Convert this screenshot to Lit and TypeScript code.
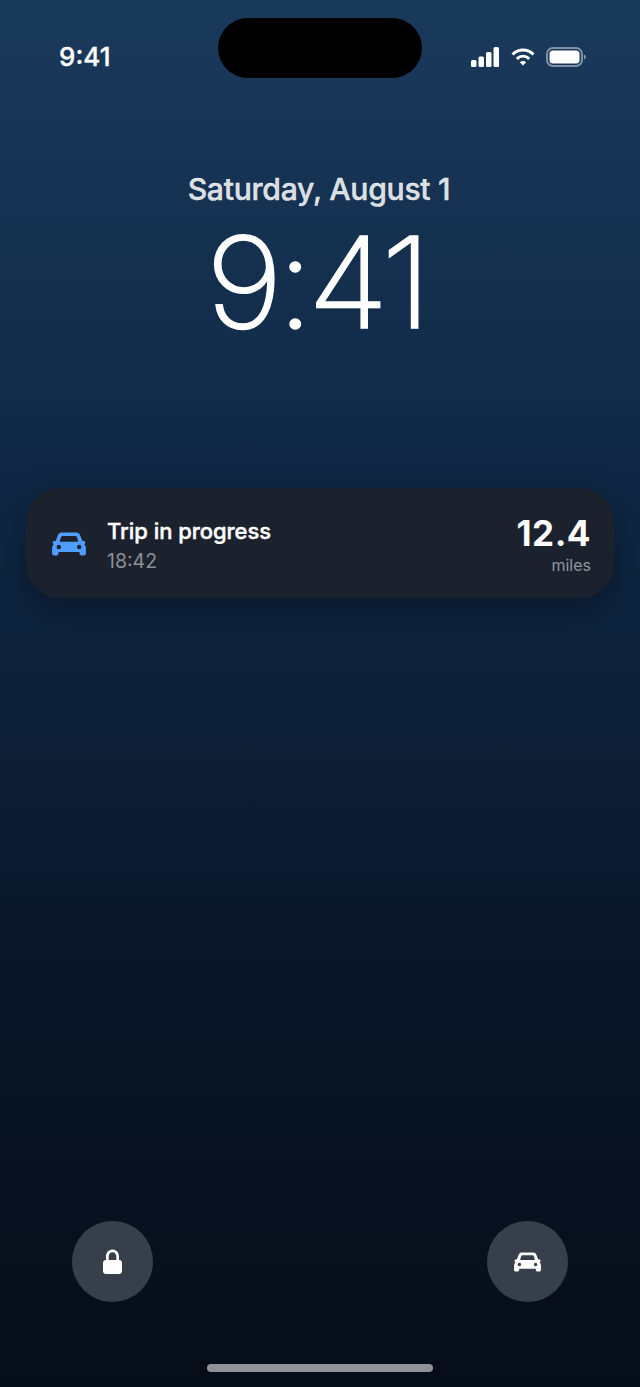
import { LitElement, html, css, svg } from "lit";
import { customElement } from "lit/decorators.js";

const carPath = svg`<path fill-rule="evenodd" d="M9.500 .5h15c1.600 0 2.900 1 3.500 2.400L30.400 9h1.300c1 0 1.700 .7 1.700 1.500s-.6 1.400-1.300 1.500l.9 1.300c.6 .8 .9 1.700 .9 2.700v5.500c0 1.100-.9 2-2 2h-2.400c-1.100 0-2-.9-2-2V20H6.500v1.500c0 1.100-.9 2-2 2H2.100c-1.100 0-2-.9-2-2V16c0-1 .3-1.900 .9-2.700l.9-1.300c-.7-.1-1.300-.7-1.300-1.500S1.300 9 2.300 9h1.300L6 2.900C6.600 1.500 7.900 .5 9.500 .5zM10.500 4c-.6 0-1.100 .4-1.300 .9L7.800 8.800c-.2 .4 .1 .9 .6 .9h17.200c.5 0 .8-.5 .6-.9l-1.400-3.900c-.2-.5-.7-.9-1.300-.9H10.500zM6.800 12.800a2.200 2.200 0 1 0 0 4.400 2.200 2.200 0 1 0 0-4.400zM27.200 12.800a2.200 2.200 0 1 0 0 4.400 2.200 2.200 0 1 0 0-4.400z"/>`;

@customElement("app-root")
export class AppRoot extends LitElement {
  static styles = css`
    :host {
      display: block;
      width: 640px;
      height: 1387px;
      font-family: Inter, "Liberation Sans", sans-serif;
    }
    .screen {
      position: relative;
      box-sizing: border-box;
      width: 640px;
      height: 1387px;
      overflow: hidden;
      display: flex;
      flex-direction: column;
      background: linear-gradient(180deg, #1a3a5c 0%, #0f2744 35%, #0a1628 70%, #050d18 100%);
      color: #fff;
    }
    .island {
      position: absolute;
      left: 218px;
      top: 18px;
      width: 204px;
      height: 60px;
      border-radius: 30px;
      background: #000;
    }
    .status {
      display: flex;
      justify-content: space-between;
      align-items: center;
      height: 30px;
      margin-top: 42px;
      padding: 0 54px 0 59px;
    }
    .status-time {
      font-size: 26px;
      font-weight: 500;
      line-height: 30px;
      -webkit-text-stroke: 0.3px #fff;
    }
    .status-icons {
      display: flex;
      align-items: center;
      gap: 12px;
    }
    .status-icons svg {
      display: block;
    }
    .status-icons svg + svg + svg {
      margin-left: -1px;
    }
    .lock-head {
      display: flex;
      flex-direction: column;
      align-items: center;
      margin-top: 97px;
    }
    .date {
      font-size: 30.200px;
      font-weight: 500;
      line-height: 40px;
      margin-right: 2px;
      color: rgba(255, 255, 255, 0.85);
      letter-spacing: -0.3px;
      -webkit-text-stroke: 0.4px rgba(255, 255, 255, 0.85);
    }
    .clock {
      font-size: 127px;
      font-weight: 200;
      line-height: 146px;
      letter-spacing: -5.500px;
      margin-right: 8px;
      color: #fff;
      -webkit-text-stroke: 1.500px #fff;
      transform: scaleX(1.040);
    }
    .card {
      display: flex;
      align-items: center;
      box-sizing: border-box;
      height: 110px;
      margin: 133px 26px 0;
      padding: 0 23px 0 26px;
      border-radius: 34px;
      background: #1c222d;
      box-shadow: 0 10px 32px rgba(0, 0, 0, 0.3);
    }
    .car {
      display: block;
      width: 34px;
      height: 24px;
      fill: #4f9dff;
      margin: 2px 21px 0 0;
    }
    .trip {
      flex: 1;
      display: flex;
      flex-direction: column;
      padding-top: 4px;
    }
    .trip-title {
      font-size: 22px;
      font-weight: 500;
      line-height: 30px;
      letter-spacing: -0.05px;
      -webkit-text-stroke: 0.4px #fff;
    }
    .trip-time {
      font-size: 19.500px;
      line-height: 26px;
      margin-top: 2px;
      color: #8a8f97;
    }
    .metric {
      display: flex;
      flex-direction: column;
      align-items: flex-end;
      padding-top: 3px;
    }
    .metric-value {
      font-size: 35px;
      font-weight: 700;
      line-height: 40px;
      letter-spacing: 0.5px;
    }
    .metric-unit {
      font-size: 16px;
      line-height: 24px;
      color: #8f95a0;
    }
    .actions {
      display: flex;
      justify-content: space-between;
      margin-top: auto;
      padding: 0 72px;
      margin-bottom: 85px;
    }
    .btn {
      display: flex;
      align-items: center;
      justify-content: center;
      width: 81px;
      height: 81px;
      border-radius: 50%;
      background: #373f4b;
    }
    .btn svg {
      display: block;
      fill: #fff;
    }
    .home {
      position: absolute;
      left: 207px;
      bottom: 15px;
      width: 226px;
      height: 8px;
      border-radius: 4px;
      background: rgba(255, 255, 255, 0.55);
    }
  `;

  render() {
    return html`
      <div class="screen">
        <div class="island"></div>
        <div class="status">
          <span class="status-time">9:41</span>
          <div class="status-icons">
            <svg width="28" height="20" viewBox="0 0 28 20" fill="#fff">
              <rect x="0" y="13" width="5.500" height="7" rx="1.500" />
              <rect x="7.500" y="9.500" width="5.500" height="10.500" rx="1.500" />
              <rect x="15" y="5" width="5.500" height="15" rx="1.500" />
              <rect x="22.500" y="0" width="5.500" height="20" rx="1.500" />
            </svg>
            <svg width="24" height="18" viewBox="0 0 24 18" fill="none" stroke="#fff" stroke-width="3">
              <path d="M1.500 6.500C7.500 .6 16.500 .6 22.500 6.500" />
              <path d="M5.800 10.800C9.500 7.300 14.500 7.300 18.200 10.800" />
              <path d="M12 17.500L8.800 14.300C10.500 12.700 13.500 12.700 15.200 14.300Z" fill="#fff" stroke="none" />
            </svg>
            <svg width="40" height="20" viewBox="0 0 40 20">
              <rect x="1" y="1" width="35" height="18" rx="6" fill="none" stroke="#fff" stroke-opacity="0.45" stroke-width="2" />
              <rect x="3.500" y="3.500" width="30" height="13" rx="3.500" fill="#fff" />
              <path d="M38 7.500C39.300 8 39.800 8.800 39.800 10S39.300 12 38 12.500Z" fill="#fff" fill-opacity="0.5" />
            </svg>
          </div>
        </div>
        <div class="lock-head">
          <div class="date">Saturday, August 1</div>
          <div class="clock">9:41</div>
        </div>
        <div class="card">
          <svg class="car" viewBox="0 0 34 24">${carPath}</svg>
          <div class="trip">
            <div class="trip-title">Trip in progress</div>
            <div class="trip-time">18:42</div>
          </div>
          <div class="metric">
            <div class="metric-value">12.4</div>
            <div class="metric-unit">miles</div>
          </div>
        </div>
        <div class="actions">
          <div class="btn">
            <svg width="19" height="25" viewBox="0 0 19 25">
              <path fill-rule="evenodd" d="M3 11V7.500C3 3.600 5.800 .5 9.500 .5S16 3.600 16 7.500V11h.2c1.500 0 2.800 1.200 2.800 2.800v8.400c0 1.600-1.300 2.800-2.800 2.800H2.800C1.300 25 0 23.800 0 22.200v-8.400C0 12.200 1.300 11 2.800 11H3zM5.700 11h7.600V7.500c0-2.400-1.600-4.300-3.800-4.300S5.700 5.100 5.700 7.500V11z" />
            </svg>
          </div>
          <div class="btn">
            <svg width="27" height="20" viewBox="0 0 34 24" preserveAspectRatio="none">${carPath}</svg>
          </div>
        </div>
        <div class="home"></div>
      </div>
    `;
  }
}
